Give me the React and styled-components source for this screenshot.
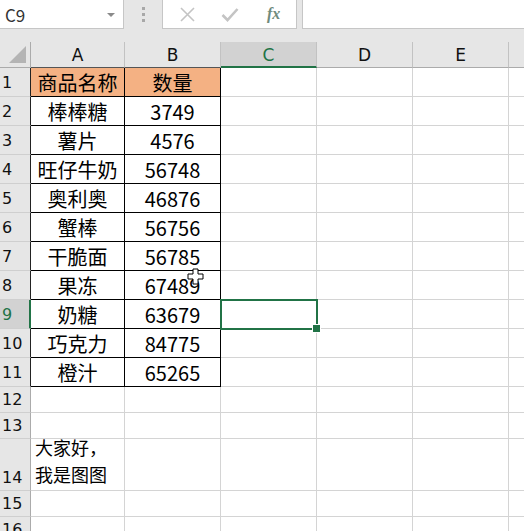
import React from 'react';
import styled, { createGlobalStyle, css } from 'styled-components';

const GlobalStyle = createGlobalStyle`
  html, body {
    margin: 0;
    padding: 0;
    background: #ffffff;
    overflow: hidden;
  }
  * {
    box-sizing: border-box;
  }
`;

const GREEN = '#217346';
const GRID = '#d4d4d4';
const CJK = `"Noto Sans CJK SC", "Noto Sans", sans-serif`;
const HEAD = `"DejaVu Sans", ${CJK}`;

const Window = styled.div`
  position: relative;
  width: 524px;
  height: 531px;
  overflow: hidden;
  background: #e6e6e6;
  font-family: ${CJK};
`;

const FormulaBar = styled.div`
  display: flex;
  height: 29px;
`;

const NameBox = styled.div`
  width: 124px;
  background: #fff;
  border-right: 1px solid #c6c6c6;
  border-bottom: 1px solid #c6c6c6;
  display: flex;
  align-items: center;
  justify-content: space-between;
  padding: 0 8px 0 5px;
  font-size: 17px;
  color: #333;
`;

const Arrow = styled.span`
  width: 0;
  height: 0;
  border-left: 4px solid transparent;
  border-right: 4px solid transparent;
  border-top: 4px solid #8a8a8a;
  margin-top: 1px;
`;

const Grip = styled.div`
  width: 38px;
  display: flex;
  flex-direction: column;
  align-items: center;
  justify-content: center;
  gap: 3px;
`;

const Dot = styled.span`
  width: 3px;
  height: 3px;
  background: #a8a8a8;
`;

const Buttons = styled.div`
  width: 135px;
  background: #fff;
  border-left: 1px solid #c6c6c6;
  border-right: 1px solid #c6c6c6;
  border-bottom: 1px solid #c6c6c6;
  display: flex;
  align-items: center;
  padding-left: 16px;
  gap: 25px;
`;

const Fx = styled.span`
  font-family: "Liberation Serif", serif;
  font-style: italic;
  font-weight: bold;
  font-size: 16px;
  color: #6f8b7d;
  margin-left: 3px;
`;

const FormulaInput = styled.div`
  flex: 1;
  margin-left: 5px;
  background: #fff;
  border-left: 1px solid #c6c6c6;
  border-bottom: 1px solid #c6c6c6;
`;

const Strip = styled.div`
  height: 13px;
`;

const Sheet = styled.div`
  display: grid;
  grid-template-columns: 31px 94px 96px 96px 96px 96px 96px;
  grid-template-rows: 26px repeat(11, 29px) 26px 26px 52px 26px 26px;
  background: #fff;
`;

const Corner = styled.div`
  background: #e6e6e6;
  border-right: 1px solid #ababab;
  border-bottom: 1px solid #ababab;
  display: flex;
  align-items: flex-end;
  justify-content: flex-end;
  padding: 0 4px 4px 0;
`;

const ColHead = styled.div`
  background: ${(p) => (p.$active ? '#d2d2d2' : '#e6e6e6')};
  color: ${(p) => (p.$active ? GREEN : '#111')};
  border-right: 1px solid #c2c2c2;
  border-bottom: ${(p) => (p.$active ? `2px solid ${GREEN}` : `1px solid ${p.$dark ? '#555' : '#ababab'}`)};
  display: flex;
  align-items: center;
  justify-content: center;
  font-family: ${HEAD};
  font-size: 17px;
  padding-top: ${(p) => (p.$active ? '1px' : '0')};
`;

const RowHead = styled.div`
  background: ${(p) => (p.$active ? '#d2d2d2' : '#e6e6e6')};
  color: ${(p) => (p.$active ? GREEN : '#111')};
  border-bottom: 1px solid #cfcfcf;
  border-right: ${(p) => (p.$active ? `2px solid ${GREEN}` : `1px solid ${p.$dark ? '#222' : '#ababab'}`)};
  display: flex;
  align-items: ${(p) => (p.$bottom ? 'flex-end' : 'center')};
  padding-left: 2px;
  padding-bottom: ${(p) => (p.$bottom ? '3px' : '0')};
  font-family: ${HEAD};
  font-size: 16px;
`;

const Cell = styled.div`
  position: relative;
  background: ${(p) => (p.$fill ? '#f4b183' : '#fff')};
  border-right: 1px solid ${(p) => (p.$boxed ? '#000' : GRID)};
  border-bottom: 1px solid ${(p) => (p.$boxed ? '#000' : GRID)};
  display: flex;
  align-items: center;
  justify-content: center;
  font-size: 20px;
  color: #000;
  white-space: nowrap;
  ${(p) =>
    p.$wrap &&
    css`
      flex-direction: column;
      align-items: flex-start;
      justify-content: flex-end;
      padding: 0 0 2px 4px;
      line-height: 27px;
      font-size: 18px;
    `}
  ${(p) =>
    p.$selected &&
    css`
      z-index: 2;
      &::after {
        content: '';
        position: absolute;
        top: -1px;
        left: -1px;
        right: -2px;
        bottom: -2px;
        border: 2px solid ${GREEN};
      }
      &::before {
        content: '';
        position: absolute;
        right: -5px;
        bottom: -5px;
        width: 7px;
        height: 7px;
        background: ${GREEN};
        border: 1px solid #fff;
        z-index: 3;
      }
    `}
`;

const Cursor = styled.svg`
  position: absolute;
  left: 187px;
  top: 268px;
  z-index: 5;
`;

const data = [
  ['商品名称', '数量'],
  ['棒棒糖', '3749'],
  ['薯片', '4576'],
  ['旺仔牛奶', '56748'],
  ['奥利奥', '46876'],
  ['蟹棒', '56756'],
  ['干脆面', '56785'],
  ['果冻', '67489'],
  ['奶糖', '63679'],
  ['巧克力', '84775'],
  ['橙汁', '65265'],
];

const cols = ['A', 'B', 'C', 'D', 'E', 'F'];

export default function App() {
  const rows = [];
  for (let r = 1; r <= 16; r++) {
    const inTable = r <= data.length;
    const values = inTable ? data[r - 1] : [];
    rows.push(
      <React.Fragment key={r}>
        <RowHead $active={r === 9} $dark={inTable} $bottom={r === 14}>
          {r}
        </RowHead>
        {cols.map((c, i) => {
          if (r === 14 && i === 0) {
            return (
              <Cell key={c} $wrap>
                <span>大家好，</span>
                <span>我是图图</span>
              </Cell>
            );
          }
          return (
            <Cell
              key={c}
              $boxed={inTable && i < 2}
              $fill={r === 1 && i < 2}
              $selected={r === 9 && c === 'C'}
            >
              {i < 2 ? values[i] : null}
            </Cell>
          );
        })}
      </React.Fragment>
    );
  }

  return (
    <>
      <GlobalStyle />
      <Window>
        <FormulaBar>
          <NameBox>
            C9
            <Arrow />
          </NameBox>
          <Grip>
            <Dot />
            <Dot />
            <Dot />
          </Grip>
          <Buttons>
            <svg width="17" height="17" viewBox="0 0 17 17">
              <path d="M2 2 L15 15 M15 2 L2 15" stroke="#c4c4c4" strokeWidth="1.6" fill="none" />
            </svg>
            <svg width="18" height="17" viewBox="0 0 18 17">
              <path d="M1.5 9 L6.5 14 L16.5 3" stroke="#c4c4c4" strokeWidth="2.6" fill="none" />
            </svg>
            <Fx>fx</Fx>
          </Buttons>
          <FormulaInput />
        </FormulaBar>
        <Strip />
        <Sheet>
          <Corner>
            <svg width="17" height="17" viewBox="0 0 17 17">
              <path d="M17 0 L17 17 L0 17 Z" fill="#b4b4b4" />
            </svg>
          </Corner>
          {cols.map((c, i) => (
            <ColHead key={c} $active={c === 'C'} $dark={i < 2}>
              {c}
            </ColHead>
          ))}
          {rows}
        </Sheet>
        <Cursor width="18" height="18" viewBox="0 0 18 18">
          <path
            d="M6 1 H11 V6 H16 V11 H11 V16 H6 V11 H1 V6 H6 Z"
            fill="#fff"
            stroke="#000"
            strokeWidth="1"
          />
        </Cursor>
      </Window>
    </>
  );
}
